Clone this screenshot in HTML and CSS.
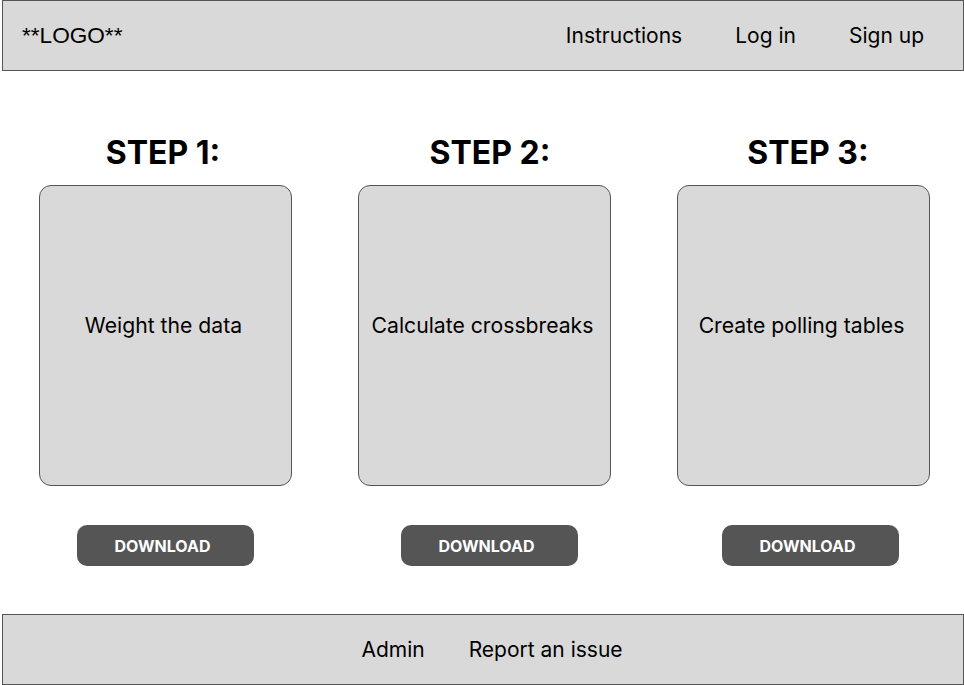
FILE: index.html
```html
<!DOCTYPE html>
<html lang="en">
<head>
<meta charset="utf-8">
<title>Steps</title>
<link rel="stylesheet" href="styles.css">
</head>
<body>
<div class="page">
  <header class="topbar">
    <div class="logo">**LOGO**</div>
    <nav class="nav">
      <a href="#">Instructions</a>
      <a href="#">Log in</a>
      <a href="#">Sign up</a>
    </nav>
  </header>
  <main class="steps">
    <section class="step step-1">
      <h2 class="step-title">STEP 1:</h2>
      <div class="card"><span>Weight the data</span></div>
      <button class="btn">DOWNLOAD</button>
    </section>
    <section class="step step-2">
      <h2 class="step-title">STEP 2:</h2>
      <div class="card"><span>Calculate crossbreaks</span></div>
      <button class="btn">DOWNLOAD</button>
    </section>
    <section class="step step-3">
      <h2 class="step-title">STEP 3:</h2>
      <div class="card"><span>Create polling tables</span></div>
      <button class="btn">DOWNLOAD</button>
    </section>
  </main>
  <footer class="footer">
    <a href="#">Admin</a>
    <a href="#">Report an issue</a>
  </footer>
</div>
</body>
</html>
```

FILE: styles.css
```css
* { box-sizing: border-box; }
html, body { margin: 0; padding: 0; background: #fff; }
body { font-family: Inter, "Noto Sans", sans-serif; color: #000; }
.page {
  width: 964px;
  height: 685px;
  padding-left: 2px;
  display: flex;
  flex-direction: column;
}
.topbar {
  height: 71px;
  background: #d9d9d9;
  border: 1px solid #555;
  display: flex;
  align-items: center;
  justify-content: space-between;
  padding: 0 39px 0 19px;
}
.logo {
  font-family: "Liberation Sans", Arial, sans-serif;
  font-size: 22.6px;
}
.nav { display: flex; gap: 53px; }
.nav a, .footer a {
  color: #000;
  text-decoration: none;
  font-size: 21px;
}
.steps {
  flex: 1;
  display: flex;
  gap: 66px;
  padding: 63px 0 0 37px;
}
.step {
  width: 253px;
  display: flex;
  flex-direction: column;
  align-items: center;
}
.step-title {
  margin: 0;
  font-size: 32px;
  font-weight: 700;
  line-height: 38px;
  height: 51px;
}
.step-1 .step-title { margin-right: 5px; }
.step-2 .step-title { margin-left: 11px; }
.step-3 .step-title { margin-left: 9px; }
.card {
  width: 253px;
  height: 301px;
  background: #d9d9d9;
  border: 1px solid #555;
  border-radius: 12px;
  display: flex;
  align-items: center;
  justify-content: center;
  padding: 0 4px 22px 0;
  font-size: 21.2px;
}
.btn {
  margin-top: 39px;
  width: 177px;
  height: 41px;
  border: none;
  border-radius: 10px;
  background: #555;
  color: #fff;
  font-family: Inter, sans-serif;
  font-weight: 700;
  font-size: 16px;
  padding: 0 6px 0 0;
}
.step-2 .btn { margin-left: 10px; }
.step-3 .btn { margin-left: 14px; }
.footer {
  height: 71px;
  background: #d9d9d9;
  border: 1px solid #555;
  display: flex;
  align-items: center;
  justify-content: center;
  gap: 44px;
  padding-left: 18px;
}
```
